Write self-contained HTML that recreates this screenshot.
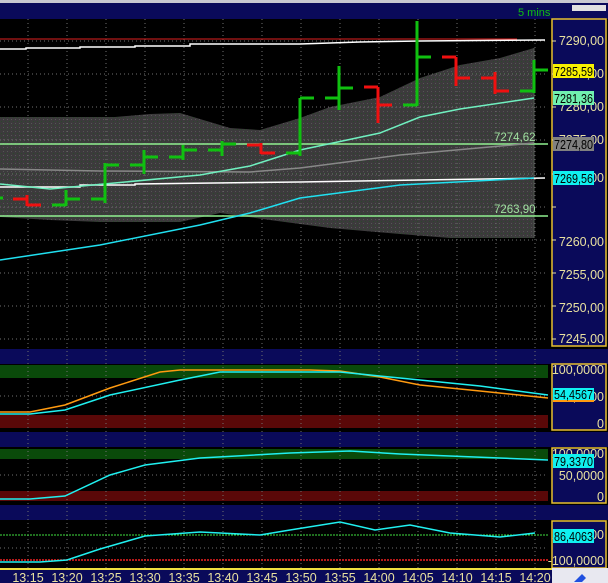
<!DOCTYPE html>
<html><head><meta charset="utf-8"><style>
html,body{margin:0;padding:0;background:#000;}
svg{display:block;font-family:"Liberation Sans",sans-serif;}
</style></head><body>
<svg width="608" height="583" viewBox="0 0 608 583" xmlns="http://www.w3.org/2000/svg">
<defs>
<pattern id="dots" width="4" height="4" patternUnits="userSpaceOnUse">
<rect width="4" height="4" fill="#3c3a3c"/><rect x="1" y="1" width="1" height="1" fill="#2a4a2a"/><rect x="3" y="3" width="1" height="1" fill="#555"/>
</pattern>
</defs>
<rect width="608" height="583" fill="#000"/>
<rect x="0" y="0" width="608" height="3" fill="#c8c8d0"/>
<rect x="0" y="3" width="608" height="16" fill="#0a0a5a"/>
<rect x="572" y="5" width="34" height="6" fill="#e0e0e0"/>
<text x="518" y="16" font-size="11" fill="#10c010">5 mins</text>
<rect x="0" y="349" width="608" height="15" fill="#0a0a5a"/>
<rect x="0" y="432" width="608" height="15" fill="#0a0a5a"/>
<rect x="0" y="505" width="608" height="15" fill="#0a0a5a"/>
<rect x="0" y="365" width="548" height="13" fill="#0a4a0a"/>
<rect x="0" y="415" width="548" height="13" fill="#5a0808"/>
<rect x="0" y="449" width="548" height="10" fill="#0a4a0a"/>
<rect x="0" y="491" width="548" height="10" fill="#5a0808"/>
<polygon fill="url(#dots)" points="0,117 115,117 150,114 180,113 200,119 230,128 260,130 300,118 330,107 380,97 420,78 460,65 500,58 534,48 534,238 450,238 400,234 330,228 270,220 220,213 180,222 100,222 50,220 0,217"/>
<polyline fill="none" stroke="#555" stroke-width="1" points="534,48 534,238"/>
<g stroke="#707070" stroke-width="1" stroke-dasharray="1,3">
<path d="M28 19V568M67 19V568M106 19V568M145 19V568M184 19V568M223 19V568M262 19V568M301 19V568M340 19V568M379 19V568M418 19V568M457 19V568M496 19V568M535 19V568"/>
<path d="M0 41H548M0 74H548M0 107H548M0 140H548M0 174H548M0 207H548M0 240H548M0 273H548M0 306H548M0 339H548"/>
<path d="M0 396H548M0 475H548M0 548H548"/>
</g>
<line x1="0" y1="39" x2="517" y2="39" stroke="#e02020" stroke-width="1"/>
<polyline fill="none" stroke="#fff" stroke-width="1.5" points="0,49 26,49 26,48 80,48 80,47 135,47 135,46 190,46 190,44 300,44 360,42 420,41 545,40"/>
<polyline fill="none" stroke="#fff" stroke-width="1.5" points="0,187 80,187 80,185 135,185 135,184 300,182 420,180 545,178"/>
<line x1="0" y1="144" x2="548" y2="144" stroke="#90f090" stroke-width="1.5"/>
<line x1="0" y1="216" x2="548" y2="216" stroke="#90f090" stroke-width="1.5"/>
<polyline fill="none" stroke="#888" stroke-width="1.5" points="0,169 100,171 250,172 300,168 400,155 534,143"/>
<polyline fill="none" stroke="#70f0c0" stroke-width="1.5" points="0,184 50,189 200,175 250,166 300,150 380,133 420,117 460,109 534,98"/>
<polyline fill="none" stroke="#20e0f0" stroke-width="1.5" points="0,260 100,245 200,225 250,213 300,198 400,185 534,178"/>
<text x="494" y="141" font-size="11.5" fill="#a0e0a0">7274,62</text>
<text x="494" y="213" font-size="11.5" fill="#a0e0a0">7263,90</text>
<g stroke-width="3" fill="none">
<path stroke="#10c010" d="M0 198H3"/>
<path stroke="#f01010" d="M13 199H27M27 195V206M27 205H41"/>
<path stroke="#10c010" d="M52 205H66M66 190V206M66 199H80"/>
<path stroke="#10c010" d="M91 199H105M105 163V203M105 165H119"/>
<path stroke="#10c010" d="M130 165H144M144 150V174M144 157H158"/>
<path stroke="#10c010" d="M169 157H183M183 145V160M183 150H197"/>
<path stroke="#10c010" d="M208 150H222M222 141V156M222 144H236"/>
<path stroke="#f01010" d="M247 145H261M261 143V154M261 153H275"/>
<path stroke="#10c010" d="M286 153H300M300 98V156M300 98H314"/>
<path stroke="#10c010" d="M325 98H339M339 66V110M339 88H353"/>
<path stroke="#f01010" d="M364 87H378M378 87V123M378 105H392"/>
<path stroke="#10c010" d="M403 105H417M417 21V106M417 57H431"/>
<path stroke="#f01010" d="M442 57H456M456 57V86M456 78H470"/>
<path stroke="#f01010" d="M481 78H495M495 72V94M495 91H509"/>
<path stroke="#10c010" d="M520 91H534M534 60V93M534 70H548"/>
</g>
<polyline fill="none" stroke="#ff9a10" stroke-width="1.5" points="0,412 30,412 65,405 110,388 160,372 180,370 310,370 340,371 380,377 420,385 480,391 548,398"/>
<polyline fill="none" stroke="#20f0f0" stroke-width="1.5" points="0,414 30,414 65,410 110,395 180,380 220,372 340,372 370,375 420,380 480,386 548,395"/>
<polyline fill="none" stroke="#20f0f0" stroke-width="1.5" points="0,499 30,499 65,496 110,475 145,465 200,458 290,453 350,451 400,454 548,460"/>
<line x1="0" y1="535" x2="548" y2="535" stroke="#40e040" stroke-width="1" stroke-dasharray="2,1"/>
<line x1="0" y1="560" x2="548" y2="560" stroke="#f02020" stroke-width="1.5" stroke-dasharray="2,1"/>
<polyline fill="none" stroke="#20f0f0" stroke-width="1.5" points="0,562 40,562 67,560 100,549 145,536 200,532 260,535 290,530 340,522 375,530 410,525 450,533 500,537 535,533"/>
<g fill="#0a0a5a" stroke="#e8c030" stroke-width="1.5">
<rect x="552" y="19" width="54" height="327"/>
<rect x="552" y="364" width="54" height="66"/>
<rect x="552" y="448" width="54" height="55"/>
<rect x="552" y="521" width="54" height="47"/>
</g>
<g stroke="#e8e0a0" stroke-width="1">
<path d="M552 41h4M552 74h4M552 107h4M552 140h4M552 174h4M552 207h4M552 240h4M552 273h4M552 306h4M552 339h4"/>
</g>
<g font-size="12.5" fill="#e8e0a0" text-anchor="end">
<text x="604" y="45">7290,00</text>
<text x="604" y="78">7285,00</text>
<text x="604" y="111">7280,00</text>
<text x="604" y="144">7275,00</text>
<text x="604" y="182">7270,00</text>
<text x="604" y="246">7260,00</text>
<text x="604" y="279">7255,00</text>
<text x="604" y="312">7250,00</text>
<text x="604" y="343">7245,00</text>
<text x="604" y="374">100,0000</text>
<text x="604" y="401">50,0000</text>
<text x="604" y="428">0</text>
<text x="604" y="458">100,0000</text>
<text x="604" y="480">50,0000</text>
<text x="604" y="501">0</text>
<text x="604" y="539">100,0000</text>
<text x="604" y="565">-100,0000</text>
</g>
<g font-size="12.5" fill="#000">
<rect x="553" y="64" width="41" height="14" fill="#f8f000"/>
<text x="554" y="76" textLength="39" lengthAdjust="spacingAndGlyphs">7285,59</text>
<rect x="553" y="91" width="41" height="14" fill="#70f0b0"/>
<text x="554" y="103" textLength="39" lengthAdjust="spacingAndGlyphs">7281,36</text>
<rect x="553" y="137" width="41" height="14" fill="#808080"/>
<text x="554" y="149" textLength="39" lengthAdjust="spacingAndGlyphs">7274,80</text>
<rect x="553" y="171" width="41" height="14" fill="#10f0f0"/>
<text x="554" y="183" textLength="39" lengthAdjust="spacingAndGlyphs">7269,56</text>
<rect x="553" y="397" width="41" height="5" fill="#ff9a10"/>
<rect x="553" y="388" width="41" height="12" fill="#10f0f0"/>
<text x="554" y="399" textLength="39" lengthAdjust="spacingAndGlyphs">54,4567</text>
<rect x="553" y="454" width="41" height="14" fill="#10f0f0"/>
<text x="554" y="466" textLength="39" lengthAdjust="spacingAndGlyphs">79,3370</text>
<rect x="553" y="529" width="41" height="14" fill="#10f0f0"/>
<text x="554" y="541" textLength="39" lengthAdjust="spacingAndGlyphs">86,4063</text>
</g>
<rect x="0" y="568" width="552" height="15" fill="#0a0a5a"/>
<rect x="0" y="568" width="552" height="2" fill="#f0e040"/>
<rect x="552" y="568" width="56" height="15" fill="#e8e8f0"/>
<path d="M574 582l8-8 4 4-4 4z" fill="#2050e0"/>
<g font-size="12.5" fill="#e8e0a0" text-anchor="middle">
<text x="28" y="582">13:15</text><text x="67" y="582">13:20</text><text x="106" y="582">13:25</text><text x="145" y="582">13:30</text><text x="184" y="582">13:35</text><text x="223" y="582">13:40</text><text x="262" y="582">13:45</text><text x="301" y="582">13:50</text><text x="340" y="582">13:55</text><text x="379" y="582">14:00</text><text x="418" y="582">14:05</text><text x="457" y="582">14:10</text><text x="496" y="582">14:15</text><text x="535" y="582">14:20</text>
</g>
</svg>
</body></html>
